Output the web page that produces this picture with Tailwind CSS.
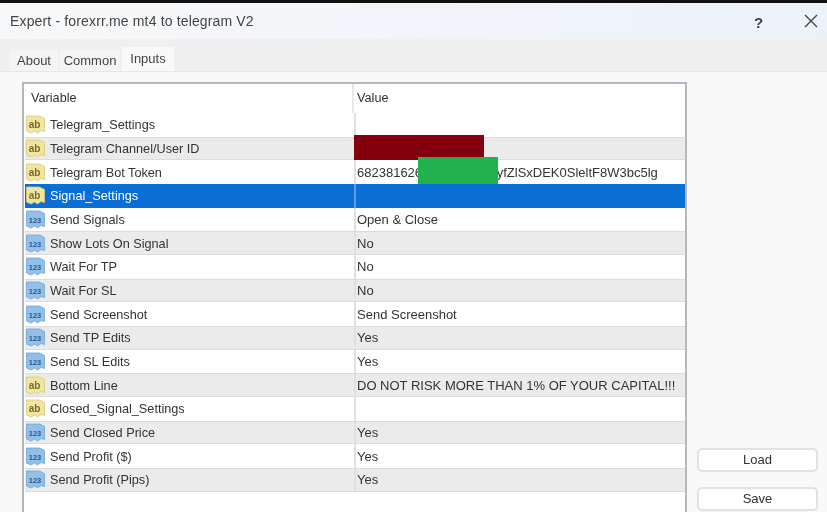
<!DOCTYPE html>
<html lang="en">
<head>
    <meta charset="UTF-8">
    <title>Expert - forexrr.me mt4 to telegram V2</title>
    <script src="https://cdn.jsdelivr.net/npm/@tailwindcss/browser@4"></script>
</head>
<body class="bg-[#f9f9f9]">
    <div class="w-[827px] h-[512px] overflow-hidden flex flex-col bg-[#f9f9f9] text-[#333] font-['Liberation_Sans',sans-serif] text-[13px] blur-[0.35px]">
        <div class="h-[3px] shrink-0 bg-[#111]"></div>

        <!-- title bar -->
        <div class="h-[36px] shrink-0 flex items-center pl-[10px] bg-gradient-to-r from-[#f7f8f9] to-[#ecf2fa] relative">
            <span class="text-[14px] text-[#444] tracking-[0.15px]">Expert - forexrr.me mt4 to telegram V2</span>
            <span class="absolute left-[754px] top-[9px] text-[15px] font-bold text-[#444]">?</span>
            <svg class="absolute left-[804px] top-[11px]" width="14" height="14" viewBox="0 0 14 14"><path d="M1 1L13 13M13 1L1 13" stroke="#444" stroke-width="1.4" fill="none"/></svg>
        </div>

        <!-- tabs -->
        <div class="h-[33px] shrink-0 flex items-end gap-[2px] pl-[10px] bg-[#f0f0f0] border-b border-[#e6e6e6]">
            <div class="w-[48px] h-[21px] pt-px flex items-center justify-center bg-[#f4f4f4] text-[#444]">About</div>
            <div class="w-[60px] h-[21px] pt-px flex items-center justify-center bg-[#f4f4f4] text-[#444]">Common</div>
            <div class="w-[52px] h-[24px] flex items-center justify-center bg-[#f9f9f9] text-[#444]">Inputs</div>
        </div>

        <!-- content -->
        <div class="flex-1 flex pl-[22px] pt-[10px] min-h-0">
            <div class="w-[665px] h-[440px] shrink-0 bg-white border-2 border-b-0 border-[#b4b7bf] relative">
                <div class="flex h-[29px] items-center text-[12.7px]">
                    <div class="w-[330px] pl-[7px] border-r-2 border-[#e8e8e8] h-full flex items-center">Variable</div>
                    <div class="pl-[3px]">Value</div>
                </div>
                <div id="rows" class="pl-[1px]"></div>
                <!-- redacted blocks painted over the rows -->
                <div class="absolute left-[330px] top-[51px] w-[130px] h-[25px] bg-[#85000f]"></div>
                <div class="absolute left-[394px] top-[73px] w-[80px] h-[27px] bg-[#22b14c]"></div>
            </div>
            <div class="flex-1 flex flex-col items-start pl-[10px] pt-[366px] gap-[15px]">
                <button class="w-[121px] h-[24px] bg-white border-2 border-[#e2e2e2] rounded-[5px] text-[#333]">Load</button>
                <button class="w-[121px] h-[24px] bg-white border-2 border-[#e2e2e2] rounded-[5px] text-[#333]">Save</button>
            </div>
        </div>
    </div>

    <script>
        const ROWS = [
            ['ab', 'Telegram_Settings', ''],
            ['ab', 'Telegram Channel/User ID', ''],
            ['ab', 'Telegram Bot Token', 'token'],
            ['ab', 'Signal_Settings', ''],
            ['123', 'Send Signals', 'Open & Close'],
            ['123', 'Show Lots On Signal', 'No'],
            ['123', 'Wait For TP', 'No'],
            ['123', 'Wait For SL', 'No'],
            ['123', 'Send Screenshot', 'Send Screenshot'],
            ['123', 'Send TP Edits', 'Yes'],
            ['123', 'Send SL Edits', 'Yes'],
            ['ab', 'Bottom Line', 'DO NOT RISK MORE THAN 1% OF YOUR CAPITAL!!!'],
            ['ab', 'Closed_Signal_Settings', ''],
            ['123', 'Send Closed Price', 'Yes'],
            ['123', 'Send Profit ($)', 'Yes'],
            ['123', 'Send Profit (Pips)', 'Yes'],
        ];

        function icon(kind) {
            const text = kind === 'ab'
                ? '<text x="8.5" y="13" font-size="10" font-weight="bold" text-anchor="middle" fill="#7a6a2a" font-family="Liberation Sans">ab</text>'
                : '<text x="9" y="12.5" font-size="7.5" font-weight="bold" text-anchor="middle" fill="#28598c" font-family="Liberation Sans">123</text>';
            const fill = kind === 'ab' ? '#f0e6a0' : '#93c0e8';
            const edge = kind === 'ab' ? '#d8c878' : '#6ea4d8';
            return `<svg class="shrink-0" width="19" height="19" viewBox="0 0 19 19">
                <path d="M0.5 1H13.5L18.5 3.5V16.5L15 15.5L11.5 18L8.5 16L5 18L0.5 16Z" fill="${fill}" stroke="${edge}" stroke-width="0.8"/>
                ${text}
            </svg>`;
        }

        document.getElementById('rows').innerHTML = ROWS.map((row, i) => {
            const selected = i === 3;
            const rowClass = selected
                ? 'bg-[#0a6fd4] text-white'
                : i % 2 === 1
                    ? 'bg-[#ebebeb] border-y border-[#dcdcdc]'
                    : 'bg-white';
            const value = row[2] === 'token'
                ? '<span class="whitespace-pre">682381626</span><span class="w-[71px] shrink-0"></span><span>tyfZlSxDEK0SleltF8W3bc5lg</span>'
                : row[2];
            return `<div class="flex items-center h-[23.67px] ${rowClass}">
                <div class="w-[329px] h-full shrink-0 flex items-center pl-[1px] gap-[5px]">${icon(row[0])}<span class="text-[12.7px] leading-[18px] pt-px">${row[1]}</span></div>
                <div class="flex-1 h-full flex items-center pl-[1px] pt-px text-[13px] leading-[18px] border-l-2 ${selected ? 'border-[#5c9fe0]' : 'border-[#e0e0e0]'}">${value}</div>
            </div>`;
        }).join('');
    </script>
</body>
</html>
